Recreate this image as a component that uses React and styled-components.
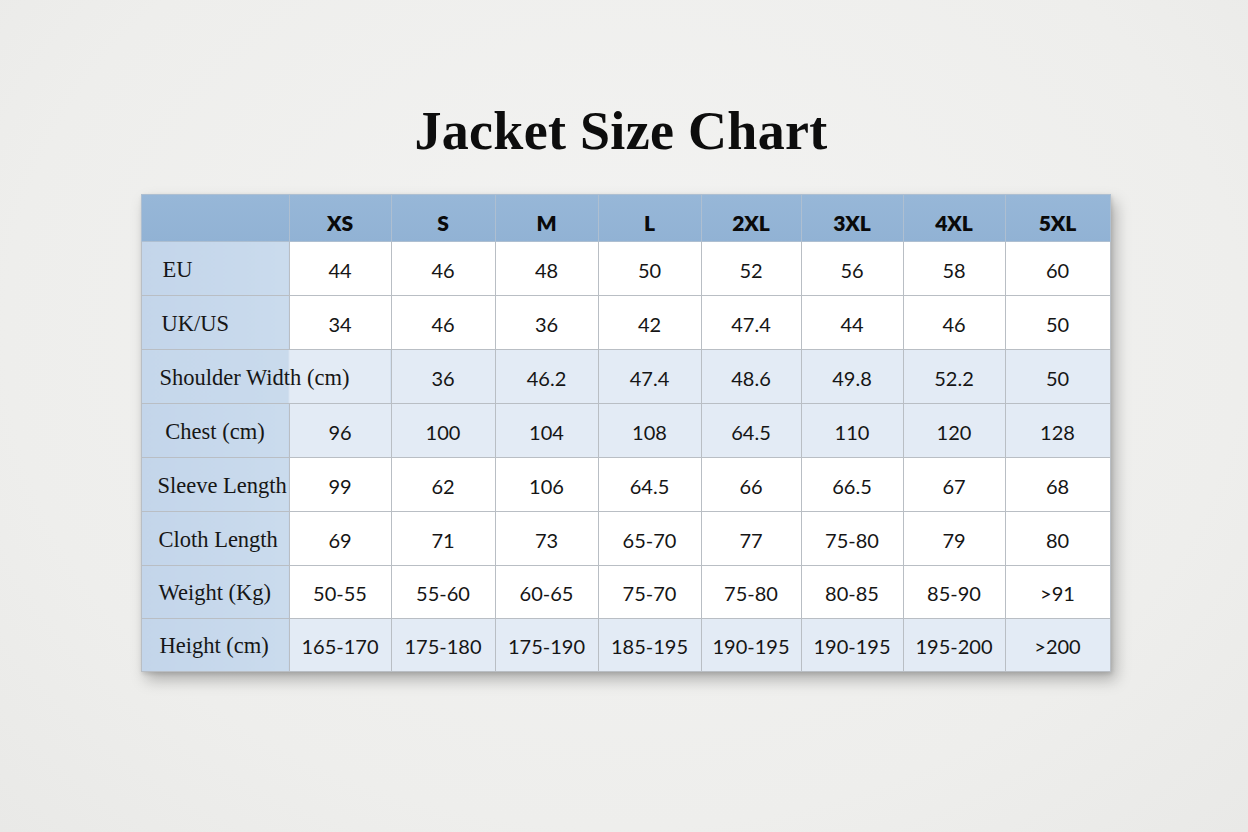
import React from "react";
import styled, { createGlobalStyle } from "styled-components";

const Global = createGlobalStyle`
  html, body { margin: 0; padding: 0; }
  body {
    background: #efefed;
    width: 1248px;
    height: 832px;
    overflow: hidden;
  }
`;

const Page = styled.div`
  width: 1248px;
  height: 832px;
  box-sizing: border-box;
  padding-top: 104px;
  display: flex;
  flex-direction: column;
  align-items: center;
  background: radial-gradient(ellipse at 50% 40%, #f3f3f2 0%, #eeeeec 70%, #e9e9e7 100%);
`;

const Title = styled.h1`
  margin: 0 0 36px -6px;
  font-family: "Liberation Serif", "Times New Roman", serif;
  font-weight: 700;
  font-size: 54px;
  line-height: 54px;
  color: #0d0d0d;
  letter-spacing: 0.3px;
`;

const Table = styled.table`
  border-collapse: collapse;
  table-layout: fixed;
  width: 969px;
  margin-left: 3px;
  box-shadow: 5px 8px 14px rgba(0, 0, 0, 0.26), 1px 2px 4px rgba(0, 0, 0, 0.12);
  background: #fff;
`;

const HeadRow = styled.tr`
  height: 47px;
  background: linear-gradient(180deg, #97b7d8 0%, #91b2d4 100%);
`;

const HeadCell = styled.th`
  border: 1px solid #aebfd1;
  padding: 8px 0 0 0;
  font-family: "Lato", "Liberation Sans", sans-serif;
  font-weight: 800;
  font-size: 21px;
  color: #0a0a0a;
  text-align: center;
  vertical-align: middle;
`;

const Row = styled.tr`
  height: ${(p) => p.$h}px;
  background: ${(p) => (p.$tint ? "#e3ebf5" : "#ffffff")};
`;

const LabelCell = styled.td`
  border: 1px solid #b9bec4;
  border-right: ${(p) => (p.$span ? "none" : "1px solid #b9bec4")};
  background: ${(p) =>
    p.$span
      ? "linear-gradient(90deg, #c5d7eb 0px, #c9daec 147px, #e3ebf5 148px, #e3ebf5 100%)"
      : "linear-gradient(90deg, #c3d5ea 0%, #cadbed 100%)"};
  padding: 2px 0 0 ${(p) => (p.$center ? 0 : p.$pad)}px;
  text-align: ${(p) => (p.$center ? "center" : "left")};
  font-family: "Liberation Serif", "Times New Roman", serif;
  font-size: 22.5px;
  color: #161616;
  white-space: nowrap;
  overflow: visible;
`;

const Cell = styled.td`
  border: 1px solid #b9bec4;
  padding: 2px 0 0 0;
  text-align: center;
  font-family: "Lato", "Liberation Sans", sans-serif;
  font-size: 20px;
  color: #151515;
  white-space: nowrap;
`;

const widths = [148, 102, 104, 103, 103, 100, 102, 102, 105];
const sizes = ["XS", "S", "M", "L", "2XL", "3XL", "4XL", "5XL"];

const rows = [
  { label: "EU", pad: 21, h: 54, values: ["44", "46", "48", "50", "52", "56", "58", "60"] },
  { label: "UK/US", pad: 20, h: 54, values: ["34", "46", "36", "42", "47.4", "44", "46", "50"] },
  { label: "Shoulder Width (cm)", pad: 18, h: 54, tint: true, span: true, values: ["36", "46.2", "47.4", "48.6", "49.8", "52.2", "50"] },
  { label: "Chest (cm)", center: true, h: 54, tint: true, values: ["96", "100", "104", "108", "64.5", "110", "120", "128"] },
  { label: "Sleeve Length", pad: 16, h: 54, values: ["99", "62", "106", "64.5", "66", "66.5", "67", "68"] },
  { label: "Cloth Length", pad: 17, h: 54, values: ["69", "71", "73", "65-70", "77", "75-80", "79", "80"] },
  { label: "Weight (Kg)", pad: 17, h: 53, values: ["50-55", "55-60", "60-65", "75-70", "75-80", "80-85", "85-90", ">91"] },
  { label: "Height (cm)", pad: 18, h: 53, tint: true, values: ["165-170", "175-180", "175-190", "185-195", "190-195", "190-195", "195-200", ">200"] },
];

export default function App() {
  return (
    <>
      <Global />
      <Page>
        <Title>Jacket Size Chart</Title>
        <Table>
          <colgroup>
            {widths.map((w, i) => (
              <col key={i} style={{ width: w }} />
            ))}
          </colgroup>
          <thead>
            <HeadRow>
              <HeadCell />
              {sizes.map((s) => (
                <HeadCell key={s}>{s}</HeadCell>
              ))}
            </HeadRow>
          </thead>
          <tbody>
            {rows.map((r) => (
              <Row key={r.label} $h={r.h} $tint={r.tint}>
                <LabelCell
                  colSpan={r.span ? 2 : 1}
                  $span={r.span}
                  $center={r.center}
                  $pad={r.pad}
                >
                  {r.label}
                </LabelCell>
                {r.values.map((v, i) => (
                  <Cell key={i}>{v}</Cell>
                ))}
              </Row>
            ))}
          </tbody>
        </Table>
      </Page>
    </>
  );
}
